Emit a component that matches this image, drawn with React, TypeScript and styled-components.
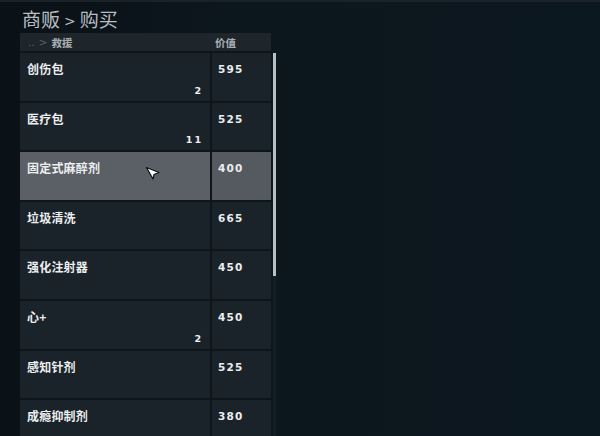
import React from "react";
import styled, { createGlobalStyle } from "styled-components";

const GlobalStyle = createGlobalStyle`
  html, body {
    margin: 0;
    padding: 0;
    background: #0b141b;
  }
  body {
    font-family: "Noto Sans CJK SC", "Noto Sans", sans-serif;
  }
`;

const Screen = styled.div`
  position: relative;
  width: 600px;
  height: 436px;
  overflow: hidden;
  box-sizing: border-box;
  border-top: 2px solid #1a2127;
  background: linear-gradient(90deg, #0a1117 0%, #0c161d 40%, #0c1820 100%);
  padding-left: 20px;
`;

const Title = styled.div`
  height: 31px;
  box-sizing: border-box;
  padding: 6px 0 0 2px;
  font-size: 19px;
  line-height: 22px;
  color: #b7bdc1;
`;

const Chevron = styled.span`
  font-family: "DejaVu Sans", sans-serif;
  font-size: 14px;
  margin: 0 4px;
  position: relative;
  top: -1px;
`;

const ListArea = styled.div`
  display: flex;
  align-items: flex-start;
`;

const Table = styled.div`
  width: 251px;
  display: flex;
  flex-direction: column;
  gap: 2px;
  background: #0f161b;
`;

const HeaderRow = styled.div`
  display: grid;
  grid-template-columns: 190px 61px;
  height: 18px;
  background: #1e252b;
  align-items: center;
  font-size: 10.5px;
  font-weight: 700;
  color: #a9b0b5;
`;

const Crumb = styled.div`
  padding-left: 8px;
  display: flex;
  align-items: center;
  gap: 4px;
`;

const Dim = styled.span`
  color: #59616a;
  font-family: "DejaVu Sans", sans-serif;
  font-weight: 400;
`;

const HeaderPrice = styled.div`
  padding-left: 5px;
`;

const Row = styled.div`
  display: grid;
  grid-template-columns: 190px 59px;
  column-gap: 2px;
  height: 47.6px;
`;

const NameCell = styled.div<{ $active?: boolean }>`
  position: relative;
  background: ${({ $active }) => ($active ? "#5a6066" : "#1b232a")};
  padding: 7px 7px 0;
  box-sizing: border-box;
  font-size: 12px;
  font-weight: 700;
  color: #eceeef;
  letter-spacing: 0.2px;
`;

const Count = styled.span`
  position: absolute;
  right: 7px;
  bottom: 5px;
  font-family: "DejaVu Sans", sans-serif;
  font-size: 9.5px;
  font-weight: 700;
  letter-spacing: 2px;
  color: #eceeef;
`;

const PriceCell = styled.div<{ $active?: boolean }>`
  background: ${({ $active }) => ($active ? "#545a60" : "#1b232a")};
  padding: 10px 0 0 6px;
  box-sizing: border-box;
  font-family: "DejaVu Sans", sans-serif;
  font-size: 10.5px;
  font-weight: 700;
  letter-spacing: 1.2px;
  color: #eceeef;
`;

const ScrollTrack = styled.div`
  margin-left: 2px;
  margin-top: 20px;
  width: 3px;
  height: 420px;
  background: #141d24;
`;

const ScrollThumb = styled.div`
  width: 3px;
  height: 223px;
  background: #b8c0c5;
`;

const Cursor = styled.svg`
  position: absolute;
  left: 145px;
  top: 164px;
`;

const items = [
  { name: "创伤包", price: 595, count: "2" },
  { name: "医疗包", price: 525, count: "11" },
  { name: "固定式麻醉剂", price: 400, active: true },
  { name: "垃圾清洗", price: 665 },
  { name: "强化注射器", price: 450 },
  { name: "心+", price: 450, count: "2" },
  { name: "感知针剂", price: 525 },
  { name: "成瘾抑制剂", price: 380 },
];

const App: React.FC = () => (
  <>
    <GlobalStyle />
    <Screen>
      <Title>
        商贩<Chevron>&gt;</Chevron>购买
      </Title>
      <ListArea>
        <Table>
          <HeaderRow>
            <Crumb>
              <Dim>..</Dim>
              <Dim>&gt;</Dim>
              <span>救援</span>
            </Crumb>
            <HeaderPrice>价值</HeaderPrice>
          </HeaderRow>
          {items.map((item) => (
            <Row key={item.name}>
              <NameCell $active={item.active}>
                {item.name}
                {item.count && <Count>{item.count}</Count>}
              </NameCell>
              <PriceCell $active={item.active}>{item.price}</PriceCell>
            </Row>
          ))}
        </Table>
        <ScrollTrack>
          <ScrollThumb />
        </ScrollTrack>
      </ListArea>
      <Cursor width="16" height="14" viewBox="0 0 16 14">
        <polygon points="1.5,1.5 14,6.5 9,8.5 8,13" fill="#ffffff" stroke="#0d1115" strokeWidth="1.2" strokeLinejoin="round" />
      </Cursor>
    </Screen>
  </>
);

export default App;
